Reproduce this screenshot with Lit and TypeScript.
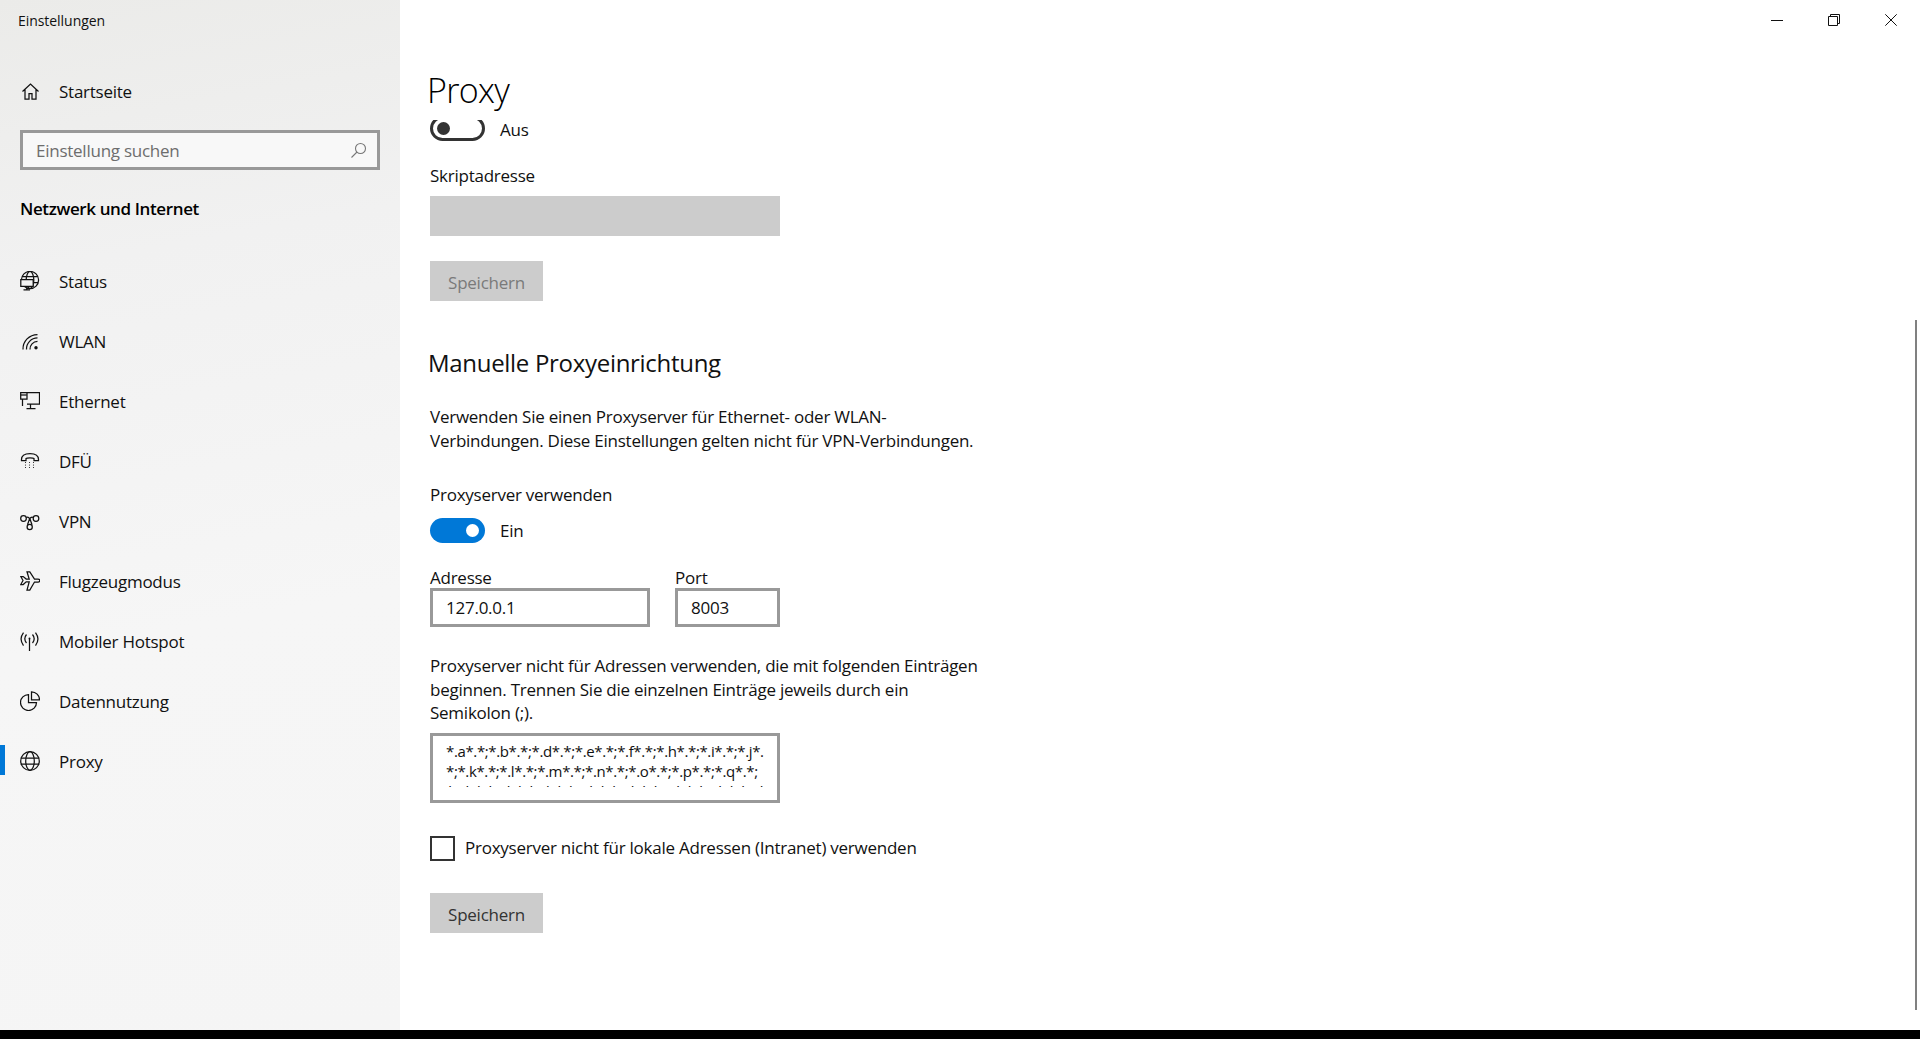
import { LitElement, html, css, svg } from "lit";
import { customElement } from "lit/decorators.js";

const dots = [4.5, 8.5, 12.5].flatMap((x) =>
  [11.5, 14, 16.5].map((y) => svg`<circle cx=${x + 1} cy=${y} r=".55" fill="currentColor" stroke="none"/>`)
);

const icons: Record<string, unknown> = {
  home: svg`<path d="M2.500 10.500 10.500 3l8 7.500M5 8.500V18h4v-5.500h3V18h4V8.500"/>`,
  status: svg`<circle cx="10" cy="9" r="8.600"/><ellipse cx="10" cy="9" rx="3.800" ry="8.600"/><path d="M2 5.500h16M2 11.500h16"/><path fill="#f3f3f3" d="M.8 8.500h12.400v6.800H.8z"/><path d="M6.800 15.500v3M3.500 18.800h6.500"/>`,
  wlan: svg`<path d="M3 18.500A14.500 14.500 0 0 1 17.500 3.500M6.500 18.500A11 11 0 0 1 17.500 7M10 18.500A7.500 7.500 0 0 1 17.500 10.500"/><circle cx="16" cy="16.800" r="1.700" fill="currentColor" stroke="none"/>`,
  ethernet: svg`<path d="M7 1.500h12.500v11.500H7M.7 1.500H7v6.500H.7zM2.500 8v7M10.500 13v4M6.500 17.500h9"/><path d="M.8 4h6"/>`,
  dfu: svg`<path d="M1.500 8.500C1.500 4.300 5.500 2.500 10 2.500s8.500 1.800 8.500 6v1h-4.500V7.500c-1-1-7-1-8 0v2H1.500z"/>${dots}`,
  vpn: svg`<circle cx="3.500" cy="7.500" r="2.800"/><circle cx="16" cy="7.500" r="2.800"/><circle cx="9.700" cy="16" r="2.600"/><path d="M6.200 6.500c1.500-.8 2.800 0 3.800 1.500l2 5.800M13.300 6.500c-1.500-.8-2.800 0-3.800 1.500l-2 5.800"/>`,
  plane: svg`<path d="M.8 5.500 3 9.500.8 13.500h2.400l3-2.700h3L7 19h2.800l4.700-8h3.500c1.200 0 1.800-.6 1.800-1.500S19.200 8 18 8h-3.500L9.800 .8H7l2.200 7.200h-3l-3-2.500z"/>`,
  hotspot: svg`<path d="M9.500 8v12"/><path d="M6.500 3.500c-2 2.500-2 6 0 8.500M3.500 1.500c-3 4-3 9 0 13M12.500 3.500c2 2.500 2 6 0 8.500M15.500 1.500c3 4 3 9 0 13"/><circle cx="9.500" cy="7.500" r="1" fill="currentColor" stroke="none"/>`,
  data: svg`<path d="M8.500 3.500a8 8 0 1 0 8 8h-8z"/><path d="M11.500 .8a8 8 0 0 1 8 8h-8z"/>`,
  proxy: svg`<circle cx="10" cy="10" r="9.300"/><ellipse cx="10" cy="10" rx="4.300" ry="9.300"/><path d="M.7 7h18.600M.7 13h18.600"/>`,
};

const icon = (name: string) =>
  html`<svg class="icon" viewBox="0 0 20 20" fill="none" stroke="currentColor" stroke-width="1.250">${icons[name]}</svg>`;

const nav = [
  ["status", "Status"],
  ["wlan", "WLAN"],
  ["ethernet", "Ethernet"],
  ["dfu", "DFÜ"],
  ["vpn", "VPN"],
  ["plane", "Flugzeugmodus"],
  ["hotspot", "Mobiler Hotspot"],
  ["data", "Datennutzung"],
  ["proxy", "Proxy"],
];

@customElement("app-root")
export class AppRoot extends LitElement {
  static styles = css`
    :host {
      display: block;
      width: 1920px;
      height: 1039px;
      overflow: hidden;
      background: #000;
      font-family: "Open Sans", "Noto Sans", sans-serif;
      font-size: 17px;
      letter-spacing: -0.25px;
      color: #111;
    }
    .window {
      position: relative;
      display: flex;
      height: 1030px;
      background: #fff;
      overflow: hidden;
    }
    .sidebar {
      width: 400px;
      flex: none;
      display: flex;
      flex-direction: column;
      background: linear-gradient(170deg, #ebebe9 0, #f1f1f1 25%, #f6f6f6 60%, #f5f5f5 100%);
    }
    .app-title {
      height: 40px;
      padding-left: 18px;
      display: flex;
      align-items: center;
      font-size: 14px;
      letter-spacing: -0.05px;
    }
    .home {
      height: 60px;
      margin-top: 21px;
      margin-bottom: 9px;
      padding-left: 20px;
      display: flex;
      align-items: center;
      gap: 19px;
    }
    .search {
      box-sizing: border-box;
      margin: 0 20px;
      height: 40px;
      border: 3px solid #999;
      background: #f8f8f8;
      display: flex;
      align-items: center;
      justify-content: space-between;
      padding: 0 10px 0 13px;
      color: #6d6d6d;
    }
    .search svg {
      width: 17px;
      height: 17px;
      color: #777;
    }
    .group {
      height: 40px;
      margin-top: 18px;
      margin-bottom: 23px;
      padding-left: 20px;
      display: flex;
      align-items: center;
      font-weight: 600;
      letter-spacing: -0.38px;
      color: #000;
    }
    .nav {
      height: 60px;
      padding-left: 20px;
      display: flex;
      align-items: center;
      gap: 19px;
    }
    .nav.active {
      background: linear-gradient(#0078d7, #0078d7) no-repeat 0 14px / 5px 30px;
    }
    .icon {
      width: 20px;
      height: 20px;
      flex: none;
    }
    .main {
      flex: 1;
      display: flex;
      flex-direction: column;
      padding-left: 30px;
    }
    .controls {
      height: 40px;
      display: flex;
      justify-content: flex-end;
      align-items: center;
      gap: 45px;
      padding-right: 23px;
    }
    .controls svg {
      width: 12px;
      height: 12px;
    }
    .title {
      height: 40px;
      margin-top: 30px;
      margin-left: -3px;
      display: flex;
      align-items: center;
      font-size: 34px;
      font-weight: 300;
      color: #000;
      letter-spacing: -0.7px;
    }
    .switch-row {
      display: flex;
      align-items: center;
      gap: 15px;
      height: 25px;
    }
    .switch-row.top {
      height: 21px;
      margin-top: 10px;
    }
    .switch-row.top span {
      padding-bottom: 2px;
    }
    .clip {
      width: 55px;
      height: 21px;
      overflow: hidden;
      flex: none;
    }
    .clip .switch {
      margin-top: -4px;
    }
    .switch {
      box-sizing: border-box;
      width: 55px;
      height: 25px;
      border-radius: 13px;
      display: flex;
      align-items: center;
      flex: none;
      padding: 0 6px;
    }
    .switch i {
      width: 13px;
      height: 13px;
      border-radius: 50%;
    }
    .switch.off {
      border: 3px solid #333;
      padding: 0 4px;
    }
    .switch.off i {
      background: #333;
    }
    .switch.on {
      background: #0078d7;
      justify-content: flex-end;
    }
    .switch.on i {
      background: #fff;
    }
    .label {
      height: 24px;
      display: flex;
      align-items: center;
    }
    .script-label {
      margin-top: 22px;
    }
    .disabled-field {
      width: 350px;
      height: 40px;
      background: #ccc;
      margin-top: 9px;
    }
    .btn {
      box-sizing: border-box;
      width: 113px;
      height: 40px;
      background: #ccc;
      display: flex;
      align-items: center;
      justify-content: center;
      padding-top: 2px;
      color: #333;
    }
    .btn.dim {
      color: #7a7a7a;
      margin-top: 25px;
    }
    .btn.save {
      margin-top: 32px;
      padding-top: 3px;
    }
    h2 {
      margin: 42px 0 0 -2px;
      height: 38px;
      display: flex;
      align-items: center;
      font-size: 24px;
      font-weight: 400;
      letter-spacing: -0.3px;
      color: #111;
    }
    p {
      margin: 0;
      width: 600px;
    }
    .intro {
      margin-top: 24px;
      line-height: 24px;
    }
    .use-label {
      margin-top: 29px;
    }
    .use-switch {
      margin-top: 12px;
    }
    .note {
      margin-top: 27px;
      line-height: 23.500px;
    }
    .fields {
      display: flex;
      gap: 25px;
      margin-top: 23px;
    }
    .field {
      display: flex;
      flex-direction: column;
    }
    .field.addr {
      width: 220px;
    }
    .field.port {
      width: 105px;
    }
    .label.tight {
      height: 22px;
    }
    .input {
      box-sizing: border-box;
      height: 39px;
      border: 3px solid #999;
      display: flex;
      align-items: center;
      padding-left: 13px;
    }
    .textarea {
      box-sizing: border-box;
      width: 350px;
      height: 70px;
      margin-top: 8px;
      border: 3px solid #999;
      padding: 5px 0 0 13px;
      font-size: 15px;
      letter-spacing: -0.37px;
      line-height: 20px;
      white-space: nowrap;
    }
    .lines {
      height: 46px;
      overflow: hidden;
    }
    .check {
      display: flex;
      align-items: center;
      gap: 10px;
      margin-top: 33px;
    }
    .check span {
      padding-bottom: 2px;
    }
    .box {
      box-sizing: border-box;
      width: 25px;
      height: 25px;
      border: 2.500px solid #333;
    }
    .scroll {
      position: absolute;
      right: 3px;
      top: 320px;
      width: 2px;
      height: 690px;
      background: #808080;
    }
  `;

  render() {
    return html`
      <div class="window">
        <aside class="sidebar">
          <div class="app-title">Einstellungen</div>
          <div class="home">${icon("home")}<span>Startseite</span></div>
          <div class="search">
            <span>Einstellung suchen</span>
            <svg viewBox="0 0 17 17" fill="none" stroke="currentColor" stroke-width="1.100"><circle cx="10.500" cy="6.500" r="5"/><path d="M7 10 1.500 15.500"/></svg>
          </div>
          <div class="group">Netzwerk und Internet</div>
          ${nav.map(
            ([i, t]) => html`<div class="nav ${i === "proxy" ? "active" : ""}">${icon(i)}<span>${t}</span></div>`
          )}
        </aside>
        <main class="main">
          <div class="controls">
            <svg viewBox="0 0 12 12" stroke="#111" stroke-width="1" fill="none"><path d="M0 6.500h12"/></svg>
            <svg viewBox="0 0 12 12" stroke="#111" stroke-width="1" fill="none"><path d="M.5 2.500h9v9h-9zM2.500 2.500V.5h9v9h-2"/></svg>
            <svg viewBox="0 0 12 12" stroke="#111" stroke-width="1" fill="none"><path d="M.3.3l11.400 11.400M11.700.3.3 11.700"/></svg>
          </div>
          <div class="title">Proxy</div>
          <div class="switch-row top">
            <div class="clip"><div class="switch off"><i></i></div></div>
            <span>Aus</span>
          </div>
          <div class="label script-label">Skriptadresse</div>
          <div class="disabled-field"></div>
          <div class="btn dim">Speichern</div>
          <h2>Manuelle Proxyeinrichtung</h2>
          <p class="intro">Verwenden Sie einen Proxyserver für Ethernet- oder WLAN-<br />Verbindungen. Diese Einstellungen gelten nicht für VPN-Verbindungen.</p>
          <div class="label use-label">Proxyserver verwenden</div>
          <div class="switch-row use-switch"><div class="switch on"><i></i></div><span>Ein</span></div>
          <div class="fields">
            <div class="field addr">
              <div class="label tight">Adresse</div>
              <div class="input">127.0.0.1</div>
            </div>
            <div class="field port">
              <div class="label tight">Port</div>
              <div class="input">8003</div>
            </div>
          </div>
          <p class="note">Proxyserver nicht für Adressen verwenden, die mit folgenden Einträgen<br />beginnen. Trennen Sie die einzelnen Einträge jeweils durch ein<br />Semikolon (;).</p>
          <div class="textarea">
            <div class="lines">
              <div>*.a*.*;*.b*.*;*.d*.*;*.e*.*;*.f*.*;*.h*.*;*.i*.*;*.j*.</div>
              <div>*;*.k*.*;*.l*.*;*.m*.*;*.n*.*;*.o*.*;*.p*.*;*.q*.*;</div>
              <div>*.r*.*;*.s*.*;*.t*.*;*.u*.*;*.v*.*;*.w*.*;*.x*.*;*.y*.</div>
            </div>
          </div>
          <div class="check"><div class="box"></div><span>Proxyserver nicht für lokale Adressen (Intranet) verwenden</span></div>
          <div class="btn save">Speichern</div>
        </main>
        <div class="scroll"></div>
      </div>
    `;
  }
}
